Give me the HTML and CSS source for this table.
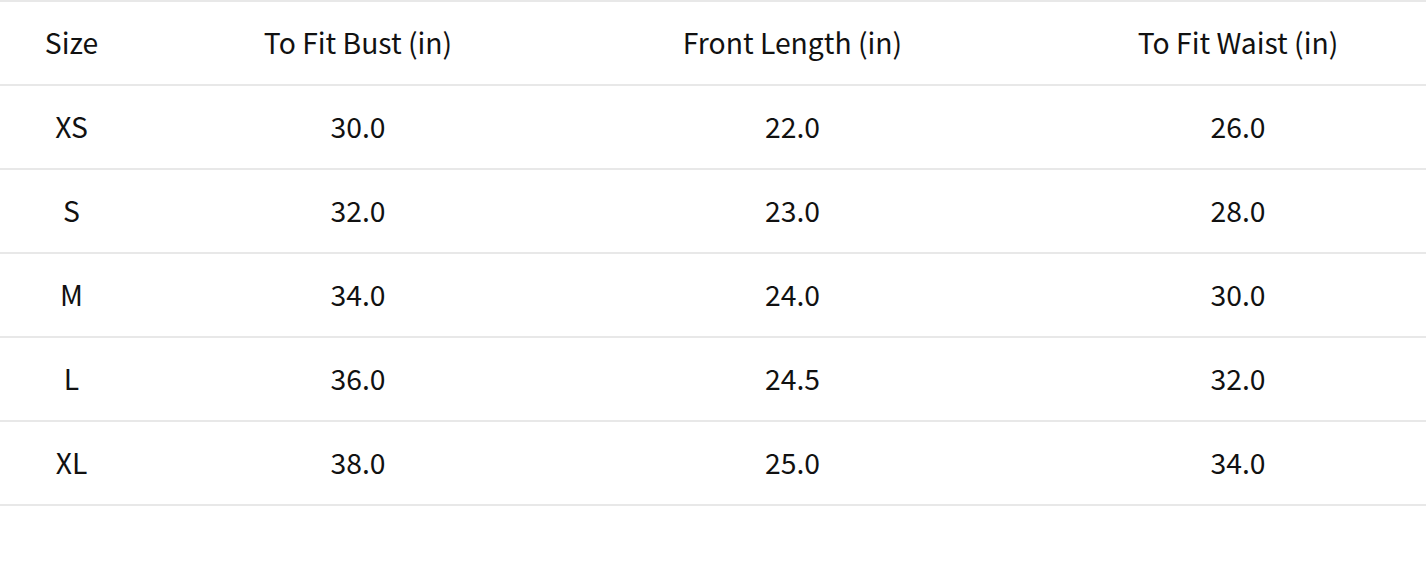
FILE: index.html
```html
<!DOCTYPE html>
<html>
<head>
<meta charset="utf-8">
<link rel="stylesheet" href="styles.css">
</head>
<body>
<table class="size-table">
  <colgroup>
    <col class="c1"><col class="c2"><col class="c3"><col class="c4">
  </colgroup>
  <thead>
    <tr><th>Size</th><th>To Fit Bust (in)</th><th>Front Length (in)</th><th class="last">To Fit Waist (in)</th></tr>
  </thead>
  <tbody>
    <tr><td>XS</td><td>30.0</td><td>22.0</td><td class="last">26.0</td></tr>
    <tr><td>S</td><td>32.0</td><td>23.0</td><td class="last">28.0</td></tr>
    <tr><td>M</td><td>34.0</td><td>24.0</td><td class="last">30.0</td></tr>
    <tr><td>L</td><td>36.0</td><td>24.5</td><td class="last">32.0</td></tr>
    <tr><td>XL</td><td>38.0</td><td>25.0</td><td class="last">34.0</td></tr>
  </tbody>
</table>
</body>
</html>
```
FILE: styles.css
```css
html, body {
  margin: 0;
  padding: 0;
  background: #ffffff;
}
body {
  font-family: "Noto Sans CJK SC", "Noto Sans", sans-serif;
  color: #111111;
}
.size-table {
  width: 1426px;
  table-layout: fixed;
  border-collapse: collapse;
  border-top: 2px solid #e8e8e8;
}
.c1 { width: 143px; }
.c2 { width: 430px; }
.c3 { width: 439px; }
.c4 { width: 414px; }
.size-table th,
.size-table td {
  height: 78px;
  padding: 0 0 4px 0;
  text-align: center;
  vertical-align: middle;
  font-size: 28.3px;
  font-weight: 400;
  border-bottom: 2px solid #e8e8e8;
}
.size-table .last {
  padding-left: 38px;
}
```
